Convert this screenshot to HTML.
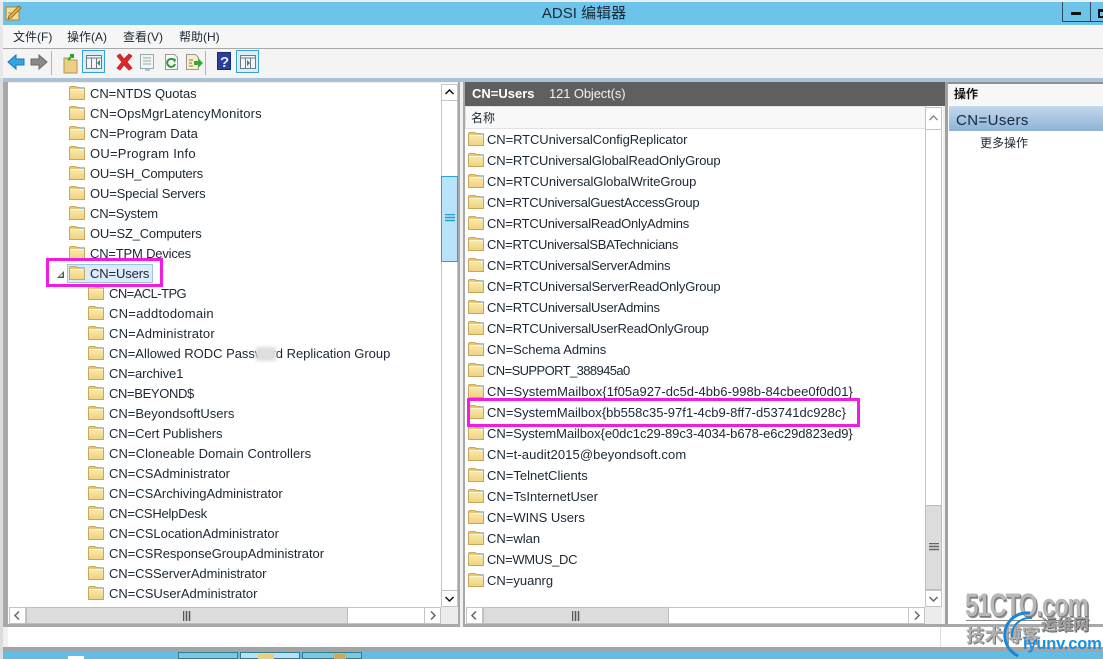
<!DOCTYPE html>
<html><head><meta charset="utf-8"><style>
html,body{margin:0;padding:0;background:#fff}
#w{position:relative;width:1103px;height:659px;overflow:hidden;background:#f4f4f4;font-family:"Liberation Sans","Noto Sans CJK SC",sans-serif;font-size:13px;color:#1c2733}
.a{position:absolute}
.r{position:absolute;height:20px;line-height:20px;white-space:nowrap;margin-top:1px}
.f{position:absolute;width:16px;height:14px}
.sb{position:absolute;background:#fff;border:1px solid #c4c4c4;box-sizing:border-box}
svg{display:block}
</style></head><body><div id="w">
<svg width="0" height="0" style="position:absolute"><defs>
<linearGradient id="fg" x1="0" y1="0" x2="0" y2="1"><stop offset="0" stop-color="#f8e7a8"/><stop offset="1" stop-color="#f0d283"/></linearGradient>
<g id="fo"><path d="M.5 3V1.500L1.500.5H7L8 1.500H15L15.500 2.500V13.500H.5Z" fill="#e6c876" stroke="#c6a75c"/><path d="M1 4H15V13H1Z" fill="url(#fg)"/><path d="M1 3.500H15" stroke="#fff4cc"/><path d="M11 1h3.500v2H11z" fill="#9cc8e4"/></g>
<g id="grip"><path d="M0 .5h10M0 3.500h10M0 6.500h10" stroke="currentColor" stroke-width="1.500"/></g>
</defs></svg>

<div class="a" style="left:0;top:2px;width:1103px;height:23px;background:#6dc3ea"></div>
<div class="a" style="left:0;top:0;width:1103px;height:2px;background:#e6f2f8"></div>
<div class="a" style="left:0;top:2px;width:3px;height:76px;background:#e8e8e8"></div>
<svg class="a" style="left:5px;top:4px" width="17" height="17" viewBox="0 0 17 17"><rect x="1" y="3" width="13" height="13" fill="#f1dc9c" stroke="#a9853a"/><path d="M4 12L14 2l2 2L6 14l-3 1z" fill="#e8b23a" stroke="#8a5a1a" stroke-width=".8"/><path d="M3 9h5M3 12h2" stroke="#b98a3a"/></svg>
<div class="a" style="left:384px;top:3px;width:400px;text-align:center;font-size:15px;line-height:21px;color:#1a2a38">ADSI 编辑器</div>
<div class="a" style="left:1062px;top:2px;width:41px;height:20px;box-sizing:border-box;border:1px solid #2d4a5c;border-top:0;border-right:0"></div>
<div class="a" style="left:1090px;top:2px;width:1px;height:20px;background:#2d4a5c"></div>
<div class="a" style="left:1071px;top:12px;width:10px;height:3px;background:#111"></div>
<div class="a" style="left:1098px;top:9px;width:12px;height:9px;box-sizing:border-box;border:2px solid #111;border-top-width:3px"></div>

<div class="a" style="left:3px;top:25px;width:1100px;height:23px;background:#f6f6f6"></div>
<div class="a" style="left:13px;top:29px;font-size:12px;line-height:17px">文件(F)</div>
<div class="a" style="left:67px;top:29px;font-size:12px;line-height:17px">操作(A)</div>
<div class="a" style="left:123px;top:29px;font-size:12px;line-height:17px">查看(V)</div>
<div class="a" style="left:179px;top:29px;font-size:12px;line-height:17px">帮助(H)</div>
<div class="a" style="left:3px;top:48px;width:1100px;height:1px;background:#a8a8a8"></div>

<svg class="a" style="left:0;top:49px" width="270" height="29" viewBox="0 49 270 29">
<path d="M8 62l8-7v4h8v6h-8v4z" fill="#36a3e3" stroke="#1c78b8"/>
<path d="M47 62l-8-7v4h-8v6h8v4z" fill="#8a8a8a" stroke="#6a6a6a"/>
<path d="M51.500 51v24M205.500 51v24" stroke="#b4b4b4"/>
<path d="M64 58h5l1 2h7v13H64z" fill="#eccf86" stroke="#b5954c"/><path d="M68 60l5-5m-3 0h3v3" stroke="#2aa52a" stroke-width="2" fill="none"/>
<rect x="82.500" y="50.500" width="22" height="22" fill="#d9eefb" stroke="#3aa0d2"/><rect x="86.500" y="55.500" width="15" height="13" fill="#f4f4f4" stroke="#6a7a88"/><path d="M87 58h14M91.500 58v10M96.500 58v10" stroke="#6a7a88"/><path d="M97 63l3-3v6z" fill="#1a9a5a"/>
<path d="M117 56l3-2 4 5 5-5 3 2-5 6 5 6-3 2-5-5-4 5-3-2 5-6z" fill="#e0282a" stroke="#b51c1c" stroke-width=".7"/>
<rect x="140.500" y="54.500" width="13" height="14" fill="#f4f4f4" stroke="#9aa"/><path d="M143 58h8M143 61h8M143 64h8" stroke="#9aa"/><path d="M145 70h5" stroke="#3aa0d2"/>
<path d="M165.500 54.500h9l3 3v12h-12z" fill="#fafafa" stroke="#999"/><path d="M174 60a4 4 0 1 0 1 4" fill="none" stroke="#2f9a3a" stroke-width="2"/><path d="M172 58l4 1-1 4z" fill="#2f9a3a"/>
<path d="M186.500 54.500h9l3 3v12h-12z" fill="#f8efc4" stroke="#999"/><path d="M189 60h4M189 63h3M189 66h4" stroke="#777"/><path d="M194 61h4v-3l5 5-5 5v-3h-4z" fill="#38a83a"/>
<rect x="217.500" y="52.500" width="13" height="17" fill="#2a3f9a" stroke="#1a2a70"/><text x="220" y="67" font-family="Liberation Sans" font-weight="bold" font-size="15" fill="#e8e8ff">?</text>
<rect x="236.500" y="50.500" width="22" height="22" fill="#d9eefb" stroke="#3aa0d2"/><rect x="240.500" y="55.500" width="15" height="13" fill="#f4f4f4" stroke="#6a7a88"/><path d="M241 58h14M245.500 58v10M250.500 58v10" stroke="#6a7a88"/><path d="M247 60l3 3-3 3z" fill="#1a9a5a"/>
</svg>

<div class="a" style="left:0;top:78px;width:1103px;height:4px;background:#a9c2d6"></div>
<div class="a" style="left:0;top:78px;width:3px;height:581px;background:#dcdcdc"></div>
<div class="a" style="left:3px;top:82px;width:1100px;height:566px;background:#f0f0f0"></div>
<div class="a" style="left:3px;top:82px;width:5px;height:545px;background:#a8a8a8"></div>

<div class="a" style="left:8px;top:83px;width:450px;height:541px;background:#fff"></div>
<div class="a" style="left:8px;top:624px;width:452px;height:3px;background:#a8a8a8"></div>
<div class="a" style="left:458px;top:82px;width:2px;height:545px;background:#a8a8a8"></div>
<div class="a" style="left:463px;top:82px;width:2px;height:545px;background:#a8a8a8"></div>
<div class="a" style="left:465px;top:624px;width:482px;height:3px;background:#a8a8a8"></div>

<div id="tree">
<svg class="f" style="left:69px;top:86px"><use href="#fo"/></svg><div class="r" style="left:90px;top:83px;letter-spacing:-.05px">CN=NTDS Quotas</div>
<svg class="f" style="left:69px;top:106px"><use href="#fo"/></svg><div class="r" style="left:90px;top:103px;letter-spacing:.16px">CN=OpsMgrLatencyMonitors</div>
<svg class="f" style="left:69px;top:126px"><use href="#fo"/></svg><div class="r" style="left:90px;top:123px;letter-spacing:.04px">CN=Program Data</div>
<svg class="f" style="left:69px;top:146px"><use href="#fo"/></svg><div class="r" style="left:90px;top:143px;letter-spacing:.24px">OU=Program Info</div>
<svg class="f" style="left:69px;top:166px"><use href="#fo"/></svg><div class="r" style="left:90px;top:163px;letter-spacing:-.2px">OU=SH_Computers</div>
<svg class="f" style="left:69px;top:186px"><use href="#fo"/></svg><div class="r" style="left:90px;top:183px;letter-spacing:-.15px">OU=Special Servers</div>
<svg class="f" style="left:69px;top:206px"><use href="#fo"/></svg><div class="r" style="left:90px;top:203px;letter-spacing:-.2px">CN=System</div>
<svg class="f" style="left:69px;top:226px"><use href="#fo"/></svg><div class="r" style="left:90px;top:223px;letter-spacing:-.2px">OU=SZ_Computers</div>
<svg class="f" style="left:69px;top:246px"><use href="#fo"/></svg><div class="r" style="left:90px;top:243px;letter-spacing:-.19px">CN=TPM Devices</div>
<div class="a" style="left:67px;top:264px;width:86px;height:19px;box-sizing:border-box;background:#dcebf9;border:1px solid #9cc1ea"></div>
<svg class="a" style="left:56px;top:270px" width="9" height="9"><path d="M8 1v7H1z" fill="#555"/><path d="M6.500 3.500v3h-3z" fill="#fff"/></svg>
<svg class="f" style="left:69px;top:266px"><use href="#fo"/></svg><div class="r" style="left:90px;top:263px;letter-spacing:-.13px">CN=Users</div>
<svg class="f" style="left:88px;top:286px"><use href="#fo"/></svg><div class="r" style="left:109px;top:283px;letter-spacing:-.56px">CN=ACL-TPG</div>
<svg class="f" style="left:88px;top:306px"><use href="#fo"/></svg><div class="r" style="left:109px;top:303px;letter-spacing:.24px">CN=addtodomain</div>
<svg class="f" style="left:88px;top:326px"><use href="#fo"/></svg><div class="r" style="left:109px;top:323px;letter-spacing:.18px">CN=Administrator</div>
<svg class="f" style="left:88px;top:346px"><use href="#fo"/></svg><div class="r" style="left:109px;top:343px;letter-spacing:-.02px">CN=Allowed RODC Password Replication Group</div>
<div class="a" style="left:256px;top:347px;width:20px;height:14px;background:#dedede;filter:blur(1.500px)"></div>
<svg class="f" style="left:88px;top:366px"><use href="#fo"/></svg><div class="r" style="left:109px;top:363px;letter-spacing:-.12px">CN=archive1</div>
<svg class="f" style="left:88px;top:386px"><use href="#fo"/></svg><div class="r" style="left:109px;top:383px;letter-spacing:-.36px">CN=BEYOND$</div>
<svg class="f" style="left:88px;top:406px"><use href="#fo"/></svg><div class="r" style="left:109px;top:403px;letter-spacing:0">CN=BeyondsoftUsers</div>
<svg class="f" style="left:88px;top:426px"><use href="#fo"/></svg><div class="r" style="left:109px;top:423px;letter-spacing:-.1px">CN=Cert Publishers</div>
<svg class="f" style="left:88px;top:446px"><use href="#fo"/></svg><div class="r" style="left:109px;top:443px;letter-spacing:.08px">CN=Cloneable Domain Controllers</div>
<svg class="f" style="left:88px;top:466px"><use href="#fo"/></svg><div class="r" style="left:109px;top:463px;letter-spacing:0">CN=CSAdministrator</div>
<svg class="f" style="left:88px;top:486px"><use href="#fo"/></svg><div class="r" style="left:109px;top:483px;letter-spacing:-.03px">CN=CSArchivingAdministrator</div>
<svg class="f" style="left:88px;top:506px"><use href="#fo"/></svg><div class="r" style="left:109px;top:503px;letter-spacing:-.22px">CN=CSHelpDesk</div>
<svg class="f" style="left:88px;top:526px"><use href="#fo"/></svg><div class="r" style="left:109px;top:523px;letter-spacing:-.01px">CN=CSLocationAdministrator</div>
<svg class="f" style="left:88px;top:546px"><use href="#fo"/></svg><div class="r" style="left:109px;top:543px;letter-spacing:-.02px">CN=CSResponseGroupAdministrator</div>
<svg class="f" style="left:88px;top:566px"><use href="#fo"/></svg><div class="r" style="left:109px;top:563px;letter-spacing:-.08px">CN=CSServerAdministrator</div>
<svg class="f" style="left:88px;top:586px"><use href="#fo"/></svg><div class="r" style="left:109px;top:583px;letter-spacing:0">CN=CSUserAdministrator</div>
</div>

<div class="a" style="left:46px;top:258px;width:117px;height:29px;box-sizing:border-box;border:3px solid #f01de0"></div>

<!-- tree scrollbars -->
<div class="sb" style="left:441px;top:84px;width:17px;height:523px"></div>
<div class="sb" style="left:441px;top:84px;width:17px;height:17px"></div>
<svg class="a" style="left:444px;top:88px" width="11" height="8"><path d="M1.500 6L5.500 2l4 4" fill="none" stroke="#111" stroke-width="1.500"/></svg>
<div class="a" style="left:441px;top:176px;width:17px;height:86px;box-sizing:border-box;background:#b9e2fb;border:1px solid #2aa2d2"></div>
<svg class="a" style="left:445px;top:214px;color:#2a9ecb" width="10" height="8"><use href="#grip"/></svg>
<div class="sb" style="left:441px;top:590px;width:17px;height:17px"></div>
<svg class="a" style="left:444px;top:595px" width="11" height="8"><path d="M1.500 2L5.500 6l4-4" fill="none" stroke="#111" stroke-width="1.500"/></svg>
<div class="a" style="left:441px;top:607px;width:17px;height:17px;background:#ececec"></div>
<div class="sb" style="left:9px;top:607px;width:432px;height:17px"></div>
<div class="sb" style="left:9px;top:607px;width:17px;height:17px"></div>
<svg class="a" style="left:13px;top:610px" width="8" height="11"><path d="M6 1.500L2 5.500l4 4" fill="none" stroke="#666" stroke-width="1.500"/></svg>
<div class="a" style="left:26px;top:607px;width:322px;height:17px;box-sizing:border-box;background:#dcdcdc;border:1px solid #bdbdbd"></div>
<svg class="a" style="left:183px;top:611px;color:#555" width="8" height="10"><path d="M.5 0v10M3.500 0v10M6.500 0v10" stroke="currentColor" stroke-width="1.500"/></svg>
<div class="sb" style="left:424px;top:607px;width:17px;height:17px"></div>
<svg class="a" style="left:429px;top:610px" width="8" height="11"><path d="M2 1.500L6 5.500l-4 4" fill="none" stroke="#666" stroke-width="1.500"/></svg>

<!-- middle -->
<div class="a" style="left:465px;top:82px;width:480px;height:24px;background:#5f5f5f"></div>
<div class="a" style="left:472px;top:85px;line-height:18px;color:#fff;font-weight:bold;font-size:13px">CN=Users</div>
<div class="a" style="left:549px;top:85px;line-height:18px;color:#f0f0f0;font-size:13px;letter-spacing:-.12px">121 Object(s)</div>
<div class="a" style="left:465px;top:106px;width:478px;height:518px;background:#fff"></div>
<div class="a" style="left:465px;top:106px;width:462px;height:23px;box-sizing:border-box;background:#f8f8f8;border:1px solid #e2e2e2"></div>
<div class="a" style="left:471px;top:110px;font-size:12px;line-height:17px">名称</div>

<svg class="f" style="left:468px;top:132px"><use href="#fo"/></svg><div class="r" style="left:487px;top:129px;letter-spacing:-.09px">CN=RTCUniversalConfigReplicator</div>
<svg class="f" style="left:468px;top:153px"><use href="#fo"/></svg><div class="r" style="left:487px;top:150px;letter-spacing:-.15px">CN=RTCUniversalGlobalReadOnlyGroup</div>
<svg class="f" style="left:468px;top:174px"><use href="#fo"/></svg><div class="r" style="left:487px;top:171px;letter-spacing:-.05px">CN=RTCUniversalGlobalWriteGroup</div>
<svg class="f" style="left:468px;top:195px"><use href="#fo"/></svg><div class="r" style="left:487px;top:192px;letter-spacing:-.24px">CN=RTCUniversalGuestAccessGroup</div>
<svg class="f" style="left:468px;top:216px"><use href="#fo"/></svg><div class="r" style="left:487px;top:213px;letter-spacing:-.21px">CN=RTCUniversalReadOnlyAdmins</div>
<svg class="f" style="left:468px;top:237px"><use href="#fo"/></svg><div class="r" style="left:487px;top:234px;letter-spacing:-.31px">CN=RTCUniversalSBATechnicians</div>
<svg class="f" style="left:468px;top:258px"><use href="#fo"/></svg><div class="r" style="left:487px;top:255px;letter-spacing:-.2px">CN=RTCUniversalServerAdmins</div>
<svg class="f" style="left:468px;top:279px"><use href="#fo"/></svg><div class="r" style="left:487px;top:276px;letter-spacing:-.17px">CN=RTCUniversalServerReadOnlyGroup</div>
<svg class="f" style="left:468px;top:300px"><use href="#fo"/></svg><div class="r" style="left:487px;top:297px;letter-spacing:-.2px">CN=RTCUniversalUserAdmins</div>
<svg class="f" style="left:468px;top:321px"><use href="#fo"/></svg><div class="r" style="left:487px;top:318px;letter-spacing:-.21px">CN=RTCUniversalUserReadOnlyGroup</div>
<svg class="f" style="left:468px;top:342px"><use href="#fo"/></svg><div class="r" style="left:487px;top:339px;letter-spacing:-.07px">CN=Schema Admins</div>
<svg class="f" style="left:468px;top:363px"><use href="#fo"/></svg><div class="r" style="left:487px;top:360px;letter-spacing:-.6px">CN=SUPPORT_388945a0</div>
<svg class="f" style="left:468px;top:384px"><use href="#fo"/></svg><div class="r" style="left:487px;top:381px;letter-spacing:.05px">CN=SystemMailbox{1f05a927-dc5d-4bb6-998b-84cbee0f0d01}</div>
<svg class="f" style="left:468px;top:405px"><use href="#fo"/></svg><div class="r" style="left:487px;top:402px;letter-spacing:.02px">CN=SystemMailbox{bb558c35-97f1-4cb9-8ff7-d53741dc928c}</div>
<svg class="f" style="left:468px;top:426px"><use href="#fo"/></svg><div class="r" style="left:487px;top:423px;letter-spacing:-.06px">CN=SystemMailbox{e0dc1c29-89c3-4034-b678-e6c29d823ed9}</div>
<svg class="f" style="left:468px;top:447px"><use href="#fo"/></svg><div class="r" style="left:487px;top:444px;letter-spacing:.1px">CN=t-audit2015@beyondsoft.com</div>
<svg class="f" style="left:468px;top:468px"><use href="#fo"/></svg><div class="r" style="left:487px;top:465px;letter-spacing:0">CN=TelnetClients</div>
<svg class="f" style="left:468px;top:489px"><use href="#fo"/></svg><div class="r" style="left:487px;top:486px;letter-spacing:0">CN=TsInternetUser</div>
<svg class="f" style="left:468px;top:510px"><use href="#fo"/></svg><div class="r" style="left:487px;top:507px;letter-spacing:0">CN=WINS Users</div>
<svg class="f" style="left:468px;top:531px"><use href="#fo"/></svg><div class="r" style="left:487px;top:528px;letter-spacing:0">CN=wlan</div>
<svg class="f" style="left:468px;top:552px"><use href="#fo"/></svg><div class="r" style="left:487px;top:549px;letter-spacing:-.34px">CN=WMUS_DC</div>
<svg class="f" style="left:468px;top:573px"><use href="#fo"/></svg><div class="r" style="left:487px;top:570px;letter-spacing:0">CN=yuanrg</div>

<div class="a" style="left:467px;top:398px;width:393px;height:29px;box-sizing:border-box;border:3px solid #f01de0"></div>

<div class="sb" style="left:925px;top:107px;width:17px;height:500px"></div>
<div class="sb" style="left:925px;top:107px;width:17px;height:23px"></div>
<svg class="a" style="left:928px;top:114px" width="11" height="8"><path d="M1.500 6L5.500 2l4 4" fill="none" stroke="#888" stroke-width="1.500"/></svg>
<div class="a" style="left:925px;top:505px;width:17px;height:85px;box-sizing:border-box;background:#dcdcdc;border:1px solid #bdbdbd"></div>
<svg class="a" style="left:929px;top:543px;color:#666" width="10" height="8"><use href="#grip"/></svg>
<div class="sb" style="left:925px;top:590px;width:17px;height:17px"></div>
<svg class="a" style="left:928px;top:595px" width="11" height="8"><path d="M1.500 2L5.500 6l4-4" fill="none" stroke="#666" stroke-width="1.500"/></svg>
<div class="a" style="left:925px;top:607px;width:17px;height:17px;background:#ececec"></div>
<div class="sb" style="left:466px;top:607px;width:459px;height:17px"></div>
<div class="sb" style="left:466px;top:607px;width:17px;height:17px"></div>
<svg class="a" style="left:470px;top:610px" width="8" height="11"><path d="M6 1.500L2 5.500l4 4" fill="none" stroke="#666" stroke-width="1.500"/></svg>
<div class="a" style="left:483px;top:607px;width:186px;height:17px;box-sizing:border-box;background:#dcdcdc;border:1px solid #bdbdbd"></div>
<svg class="a" style="left:572px;top:611px;color:#555" width="8" height="10"><path d="M.5 0v10M3.500 0v10M6.500 0v10" stroke="currentColor" stroke-width="1.500"/></svg>
<div class="sb" style="left:908px;top:607px;width:17px;height:17px"></div>
<svg class="a" style="left:913px;top:610px" width="8" height="11"><path d="M2 1.500L6 5.500l-4 4" fill="none" stroke="#666" stroke-width="1.500"/></svg>

<!-- right -->
<div class="a" style="left:945px;top:82px;width:3px;height:545px;background:#a0a0a0"></div>
<div class="a" style="left:948px;top:82px;width:155px;height:2px;background:#909090"></div>
<div class="a" style="left:948px;top:84px;width:155px;height:543px;background:#fff"></div>
<div class="a" style="left:948px;top:84px;width:155px;height:21px;background:#f7f7f7"></div>
<div class="a" style="left:954px;top:86px;font-size:12px;line-height:17px;color:#111;font-weight:bold">操作</div>
<div class="a" style="left:949px;top:106px;width:154px;height:25px;background:linear-gradient(#c2d9ec,#8fb2d6)"></div>
<div class="a" style="left:956px;top:111px;font-size:15px;line-height:19px;letter-spacing:.4px;color:#16283a">CN=Users</div>
<div class="a" style="left:980px;top:135px;font-size:12px;line-height:17px">更多操作</div>
<div class="a" style="left:945px;top:624px;width:158px;height:3px;background:#a8a8a8"></div>

<!-- status -->
<div class="a" style="left:8px;top:627px;width:1095px;height:21px;background:#fff"></div>
<div class="a" style="left:940px;top:627px;width:1px;height:21px;background:#ddd"></div>
<div class="a" style="left:3px;top:647px;width:1100px;height:5px;background:#a4a4a4"></div>
<div class="a" style="left:3px;top:652px;width:1100px;height:7px;background:#62bde6"></div>
<div class="a" style="left:68px;top:656px;width:16px;height:3px;background:#fff"></div>
<div class="a" style="left:178px;top:652px;width:60px;height:7px;box-sizing:border-box;border:1px solid #2b7f8f;background:#7cc6e6"></div>
<div class="a" style="left:240px;top:652px;width:60px;height:7px;box-sizing:border-box;border:1px solid #2b7f8f;background:#b8e0f2"></div>
<div class="a" style="left:302px;top:652px;width:60px;height:7px;box-sizing:border-box;border:1px solid #2b7f8f;background:#7cc6e6"></div>
<div class="a" style="left:258px;top:654px;width:16px;height:5px;background:#e9cf80"></div>
<div class="a" style="left:334px;top:654px;width:12px;height:5px;background:#c9ab5e"></div>

<!-- watermark -->
<div class="a" style="left:965px;top:588px;font:bold 32px/34px 'Liberation Sans',sans-serif;color:#b8b8b8;text-shadow:1px 1px 0 #777,2px 2px 0 #999;letter-spacing:-1.500px;transform:scaleX(.75);transform-origin:left">51CTO.com</div>
<div class="a" style="left:966px;top:620px;width:124px;height:1px;background:#888"></div>
<div class="a" style="left:966px;top:624px;font:bold 18.500px/24px 'Liberation Sans','Noto Sans CJK SC',sans-serif;color:#b0b0b0;text-shadow:1px 1px 0 #777">技术博客</div>
<div class="a" style="left:1041px;top:616px;font:bold 16px/20px 'Liberation Sans','Noto Sans CJK SC',sans-serif;color:#a0a0a0;text-shadow:1px 1px 0 #666">运维网</div>
<svg class="a" style="left:1000px;top:610px" width="40" height="49"><path d="M30 3C14 2 3 14 5 28c1 9 7 15 13 18" fill="none" stroke="#1b86d8" stroke-width="3"/><path d="M32 8C20 7 11 16 12 27" fill="none" stroke="#1b86d8" stroke-width="2"/></svg>
<div class="a" style="left:1023px;top:633px;font:bold 16.500px/22px 'Liberation Sans',sans-serif;color:#1a8fdf;letter-spacing:-.2px">iyunv.com</div>
</div></body></html>
